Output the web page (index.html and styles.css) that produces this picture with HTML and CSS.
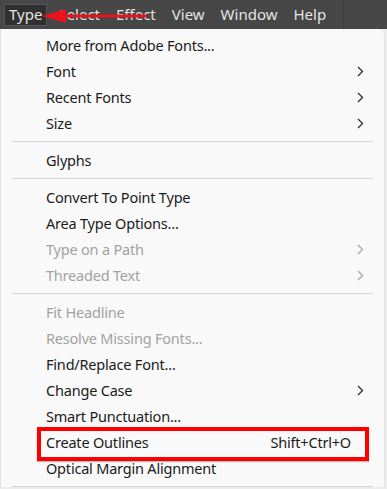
FILE: index.html
```html
<!DOCTYPE html>
<html lang="en">
<head>
    <meta charset="UTF-8">
    <title>Type menu</title>
    <link rel="stylesheet" href="styles.css">
</head>
<body>
    <div class="menubar">
        <span class="top-item active">Type</span>
        <span class="top-item">Select</span>
        <span class="top-item">Effect</span>
        <span class="top-item">View</span>
        <span class="top-item">Window</span>
        <span class="top-item">Help</span>
        <span class="bar-divider"></span>
        <!-- annotation arrow -->
        <svg class="arrow" width="110" height="16" viewBox="0 0 110 16">
            <path d="M24 6.5 H105 V9.5 H24 Z" fill="#e8141b"/>
            <path d="M0 8 L24 1 L24 15 Z" fill="#e8141b"/>
        </svg>
    </div>

    <div class="menu">
        <div class="item">More from Adobe Fonts...</div>
        <div class="item sub">Font<svg class="chev" width="7" height="11" viewBox="0 0 7 11"><path d="M1 1 L5.5 5.5 L1 10" /></svg></div>
        <div class="item sub">Recent Fonts<svg class="chev" width="7" height="11" viewBox="0 0 7 11"><path d="M1 1 L5.5 5.5 L1 10" /></svg></div>
        <div class="item sub">Size<svg class="chev" width="7" height="11" viewBox="0 0 7 11"><path d="M1 1 L5.5 5.5 L1 10" /></svg></div>
        <div class="sep"></div>
        <div class="item">Glyphs</div>
        <div class="sep"></div>
        <div class="item">Convert To Point Type</div>
        <div class="item">Area Type Options...</div>
        <div class="item sub disabled">Type on a Path<svg class="chev" width="7" height="11" viewBox="0 0 7 11"><path d="M1 1 L5.5 5.5 L1 10" /></svg></div>
        <div class="item sub disabled">Threaded Text<svg class="chev" width="7" height="11" viewBox="0 0 7 11"><path d="M1 1 L5.5 5.5 L1 10" /></svg></div>
        <div class="sep"></div>
        <div class="item disabled">Fit Headline</div>
        <div class="item disabled">Resolve Missing Fonts...</div>
        <div class="item">Find/Replace Font...</div>
        <div class="item sub">Change Case<svg class="chev" width="7" height="11" viewBox="0 0 7 11"><path d="M1 1 L5.5 5.5 L1 10" /></svg></div>
        <div class="item">Smart Punctuation...</div>
        <div class="item marked">Create Outlines<span class="shortcut">Shift+Ctrl+O</span></div>
        <div class="item">Optical Margin Alignment</div>
        <div class="sep"></div>
    </div>
</body>
</html>
```

FILE: styles.css
```css
body {
    margin: 0;
    background-color: #ececec;
    font-family: "Noto Sans", "Open Sans", sans-serif;
    font-size: 15px;
    overflow: hidden;
}
.menubar {
    position: relative;
    height: 29px;
    background-color: #474747;
    display: flex;
    align-items: center;
    padding-left: 4px;
}
.top-item {
    color: #e4e4e4;
    padding: 2px 5px 3px;
    margin-right: 6px;
    line-height: 17px;
}
.top-item.active {
    background-color: #303030;
    border: 1px solid #555;
    padding: 1px 4px 2px;
}
.bar-divider {
    width: 1px;
    height: 29px;
    background-color: #3e3e3e;
    margin-left: 6px;
}
.arrow {
    position: absolute;
    left: 42px;
    top: 8px;
}
.menu {
    width: 383px;
    margin-left: 1px;
    background-color: #f9f9f9;
    border-radius: 0 6px 0 0;
    padding-top: 3px;
    box-shadow: -1px 0 0 #e2e2e2, 1px 0 0 #e2e2e2;
    font-size: 14.5px;
    letter-spacing: -0.2px;
}
.item {
    position: relative;
    height: 26px;
    line-height: 26px;
    padding-left: 45px;
    padding-right: 20px;
    color: #1b1b1b;
    display: flex;
    align-items: center;
    justify-content: space-between;
}
.item.disabled {
    color: #a2a2a2;
}
.chev {
    fill: none;
    stroke: #333;
    stroke-width: 1.4;
}
.disabled .chev {
    stroke: #a8a8a8;
}
.shortcut {
    margin-right: 13px;
}
.marked::after {
    content: "";
    position: absolute;
    left: 36px;
    right: 15px;
    top: -2px;
    bottom: -6px;
    border: 4px solid #ff0000;
    box-shadow: 0 1px 1px rgba(0,0,0,0.25);
}
.sep {
    height: 1px;
    background-color: #d4d4d4;
    margin: 5px 11px 5px 11px;
}
```
